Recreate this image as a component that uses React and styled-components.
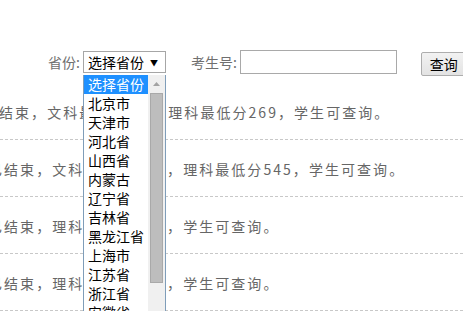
import React from 'react';
import styled, { createGlobalStyle } from 'styled-components';

const PROVINCES = [
  '选择省份', '北京市', '天津市', '河北省', '山西省', '内蒙古', '辽宁省',
  '吉林省', '黑龙江省', '上海市', '江苏省', '浙江省', '安徽省', '福建省',
];

const NOTICES = [
  { indent: -1, text: '结束，文科最低分 41，理科最低分269，学生可查询。' },
  { indent: -12, text: '已结束，文科最低分 493，理科最低分545，学生可查询。' },
  { indent: -12, text: '已结束，理科最低分 352，学生可查询。' },
  { indent: -12, text: '已结束，理科最低分 318，学生可查询。' },
];

const App = () => {
  return (
    <Page>
      <GlobalStyle />
      <SearchForm>
        <Label>省份:</Label>
        <Field>
          <SelectBox>
            <span>选择省份</span>
            <Arrow>▼</Arrow>
          </SelectBox>
          <Dropdown>
            <Options>
              {PROVINCES.map((name, i) => (
                <Option key={name} $active={i === 0}>{name}</Option>
              ))}
            </Options>
            <Scrollbar>
              <ScrollUp>
                <svg width="7" height="4" viewBox="0 0 7 4">
                  <path d="M0 4 L3.5 0 L7 4 Z" fill="#a3a3a3" />
                </svg>
              </ScrollUp>
              <Thumb />
            </Scrollbar>
          </Dropdown>
        </Field>
        <Label $gap={25}>考生号:</Label>
        <TextInput />
        <Button>查询</Button>
      </SearchForm>

      <NoticeList>
        {NOTICES.map((n) => (
          <Notice key={n.text} $indent={n.indent}>{n.text}</Notice>
        ))}
      </NoticeList>
    </Page>
  );
};

const GlobalStyle = createGlobalStyle`
  html, body {
    margin: 0;
    padding: 0;
    background: #fff;
    overflow: hidden;
  }
  body {
    font-family: "Noto Sans CJK SC", "Microsoft YaHei", sans-serif;
  }
`;

const Page = styled.div`
  position: relative;
  width: 463px;
  height: 311px;
  overflow: hidden;
`;

const SearchForm = styled.form`
  display: flex;
  align-items: center;
  height: 24px;
  padding: 50px 0 0 48px;
  margin: 0 0 9px;
  white-space: nowrap;
`;

const Label = styled.span`
  font-size: 14px;
  line-height: 1;
  color: #6f6f6f;
  margin-left: ${(p) => p.$gap || 0}px;
  margin-right: 3px;
`;

const Field = styled.div`
  position: relative;
  z-index: 2;
`;

const SelectBox = styled.div`
  box-sizing: border-box;
  width: 83px;
  height: 22px;
  display: flex;
  align-items: center;
  justify-content: space-between;
  padding: 0 7px 0 4px;
  border: 1px solid #a6a6a6;
  background: #fff;
  font-size: 14px;
  color: #000;
`;

const Arrow = styled.span`
  font-size: 8px;
  color: #000;
`;

const Dropdown = styled.div`
  position: absolute;
  top: calc(100% + 2px);
  left: 0;
  box-sizing: border-box;
  width: 83px;
  height: 240px;
  display: flex;
  background: #fff;
  border-left: 1px solid #7f9db9;
  border-right: 1px solid #7f9db9;
`;

const Options = styled.ul`
  flex: 1;
  margin: 0;
  padding: 0;
  list-style: none;
  overflow: hidden;
`;

const Option = styled.li`
  height: 19px;
  line-height: 19px;
  padding-left: 4px;
  font-size: 14px;
  color: ${(p) => (p.$active ? '#fff' : '#000')};
  background: ${(p) => (p.$active ? '#1e90ff' : 'transparent')};
`;

const Scrollbar = styled.div`
  width: 17px;
  display: flex;
  flex-direction: column;
  align-items: center;
  background: #f0f0f0;
`;

const ScrollUp = styled.div`
  height: 17px;
  display: flex;
  align-items: center;
  justify-content: center;
`;

const Thumb = styled.div`
  box-sizing: border-box;
  width: 13px;
  height: 190px;
  margin-top: 1px;
  background: #bdbdbd;
  border: 1px solid #a9a9a9;
`;

const TextInput = styled.input`
  box-sizing: border-box;
  width: 157px;
  height: 24px;
  margin: 0;
  border: 1px solid #a9a9a9;
  background: #fff;
`;

const Button = styled.button`
  box-sizing: border-box;
  flex-shrink: 0;
  height: 24px;
  margin: 4px 0 0 24px;
  padding: 0 8px;
  border: 1px solid #adadad;
  border-radius: 2px;
  background: linear-gradient(#f2f2f2, #e3e3e3);
  font-family: inherit;
  font-size: 14px;
  line-height: 1;
  color: #000;
`;

const NoticeList = styled.div`
  display: flex;
  flex-direction: column;
`;

const Notice = styled.div`
  padding: 19px 0 17px;
  line-height: 20px;
  font-size: 14px;
  letter-spacing: 2.05px;
  color: #666;
  white-space: nowrap;
  text-indent: ${(p) => p.$indent}px;
  border-bottom: 1px dashed #c8c8c8;
`;

export default App;
